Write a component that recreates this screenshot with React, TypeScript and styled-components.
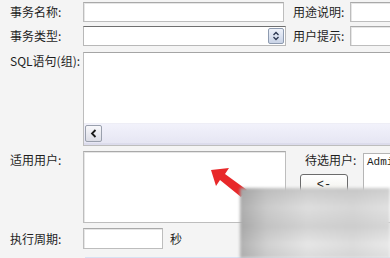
import React from "react";
import styled, { createGlobalStyle } from "styled-components";

const Global = createGlobalStyle`
  html, body { margin: 0; padding: 0; background: #f4f4f4; }
  body { width: 390px; height: 258px; overflow: hidden; font-family: "Noto Sans CJK SC", "Noto Sans", sans-serif; color: #1e1e1e; }
`;

const Page = styled.div`
  position: relative;
  width: 390px;
  height: 258px;
  overflow: hidden;
  padding-top: 2px;
  box-sizing: border-box;
`;

const Row = styled.div<{ $mt?: number; $top?: boolean }>`
  display: flex;
  align-items: ${(p) => (p.$top ? "flex-start" : "center")};
  margin-top: ${(p) => p.$mt ?? 0}px;
`;

const Label = styled.div<{ $pt?: number }>`
  width: 83px;
  flex: none;
  box-sizing: border-box;
  padding-left: 10px;
  padding-top: ${(p) => p.$pt ?? 0}px;
  font-size: 12px;
  line-height: 16px;
  white-space: nowrap;
`;

const SideLabel = styled.div<{ $ml: number; $w: number }>`
  margin-left: ${(p) => p.$ml}px;
  width: ${(p) => p.$w}px;
  flex: none;
  font-size: 12px;
  line-height: 16px;
  white-space: nowrap;
`;

const Field = styled.div<{ $w: number; $h: number }>`
  width: ${(p) => p.$w}px;
  height: ${(p) => p.$h}px;
  flex: none;
  box-sizing: border-box;
  background: #fff;
  border: 1px solid #bdbdbd;
  border-top-color: #a9a9a9;
  box-shadow: inset 1px 1px 0 #e6e6e6;
`;

const SelectBox = styled.div`
  width: 203px;
  height: 20px;
  flex: none;
  box-sizing: border-box;
  background: #fff;
  border: 1px solid #b8b8b8;
  border-top: 1px solid #6f6f6f;
  display: flex;
  justify-content: flex-end;
  align-items: center;
  padding-right: 1px;
`;

const SelectBtn = styled.div`
  width: 16px;
  height: 16px;
  box-sizing: border-box;
  border: 1px solid #8e9bb0;
  border-radius: 2px;
  background: linear-gradient(#eef2fa, #c9d3e6);
  display: flex;
  align-items: center;
  justify-content: center;
`;

const TextArea = styled.div`
  width: 320px;
  height: 94px;
  flex: none;
  box-sizing: border-box;
  background: #fff;
  border: 1px solid #bdbdbd;
  border-top-color: #a5a5a5;
  display: flex;
  flex-direction: column;
  justify-content: flex-end;
`;

const HScroll = styled.div`
  height: 19px;
  background: linear-gradient(#f2f2fb, #e6e6f3);
  border-top: 1px solid #eeeef6;
  border-bottom: 2px solid #dcdcec;
  display: flex;
  align-items: center;
  padding-left: 1px;
`;

const ScrollBtn = styled.div`
  width: 17px;
  height: 17px;
  box-sizing: border-box;
  border: 1px solid #9aa0ad;
  border-radius: 2px;
  background: linear-gradient(#f8f8fb, #dcdde6);
  display: flex;
  align-items: center;
  justify-content: center;
`;

const RightBlock = styled.div`
  display: grid;
  grid-template-columns: 63px auto;
  grid-template-rows: 23px auto;
  margin-left: 14px;
`;

const PickLabel = styled.div`
  padding-left: 5px;
  padding-top: 1px;
  font-size: 12px;
  line-height: 16px;
  white-space: nowrap;
`;

const ListBox = styled.div`
  grid-row: 1 / span 2;
  grid-column: 2;
  width: 40px;
  height: 70px;
  margin-top: 2px;
  box-sizing: border-box;
  background: #fff;
  border: 1px solid #b5b5b5;
  font-family: "Liberation Mono", "DejaVu Sans Mono", monospace;
  font-size: 11px;
  line-height: 14px;
  padding: 1px 0 0 3px;
  white-space: nowrap;
  overflow: hidden;
`;

const ArrowButton = styled.div`
  width: 48px;
  height: 26px;
  box-sizing: border-box;
  border: 1px solid #6b6b6b;
  border-radius: 3px;
  background: linear-gradient(#ffffff, #ecebe4);
  font-family: "Liberation Mono", monospace;
  font-size: 12px;
  line-height: 20px;
  text-align: center;
  color: #222;
`;

const Unit = styled.div`
  margin-left: 7px;
  font-size: 12px;
  line-height: 16px;
`;

const BottomStrip = styled.div`
  margin-top: 8px;
  margin-left: 85px;
  height: 3px;
  background: #d7e1f2;
`;

const Mosaic = styled.div`
  position: absolute;
  left: 240px;
  top: 188px;
  width: 150px;
  height: 70px;
  background:
    linear-gradient(90deg, rgba(140,140,140,0.6) 0%, rgba(175,175,175,0.4) 18%, rgba(220,220,220,0.15) 45%, rgba(200,200,200,0.35) 75%, rgba(240,240,240,0.2) 100%),
    linear-gradient(180deg, #c4c4c4 0%, #dedede 28%, #cfcfcf 55%, #e8e8e8 80%, #dadada 100%);
  filter: blur(1.5px);
`;

const RedArrow = styled.svg`
  position: absolute;
  left: 205px;
  top: 160px;
`;

export default function App() {
  return (
    <Page>
      <Global />
      <Row>
        <Label>事务名称:</Label>
        <Field $w={201} $h={20} />
        <SideLabel $ml={9} $w={57}>用途说明:</SideLabel>
        <Field $w={60} $h={20} />
      </Row>
      <Row $mt={4}>
        <Label>事务类型:</Label>
        <SelectBox>
          <SelectBtn>
            <svg width="8" height="10" viewBox="0 0 8 10">
              <path d="M1.5 4 L4 1.5 L6.5 4 M1.5 6 L4 8.5 L6.5 6" stroke="#2b3650" strokeWidth="1.3" fill="none" />
            </svg>
          </SelectBtn>
        </SelectBox>
        <SideLabel $ml={7} $w={57}>用户提示:</SideLabel>
        <Field $w={60} $h={20} />
      </Row>
      <Row $mt={6} $top>
        <Label $pt={1}>SQL语句(组):</Label>
        <TextArea>
          <HScroll>
            <ScrollBtn>
              <svg width="8" height="9" viewBox="0 0 8 9">
                <path d="M5.5 1 L2 4.5 L5.5 8" stroke="#1a1a1a" strokeWidth="1.8" fill="none" />
              </svg>
            </ScrollBtn>
          </HScroll>
        </TextArea>
      </Row>
      <Row $mt={5} $top>
        <Label $pt={1}>适用用户:</Label>
        <Field $w={203} $h={72} />
        <RightBlock>
          <PickLabel>待选用户:</PickLabel>
          <ListBox>Admin</ListBox>
          <ArrowButton>&lt;-</ArrowButton>
        </RightBlock>
      </Row>
      <Row $mt={5}>
        <Label>执行周期:</Label>
        <Field $w={80} $h={21} />
        <Unit>秒</Unit>
      </Row>
      <BottomStrip />
      <RedArrow width="50" height="45" viewBox="0 0 50 45">
        <path d="M6 10 L24 8 L20 14 L42 30 L36 37 L15 20 L11 26 Z" fill="#e8282a" />
      </RedArrow>
      <Mosaic />
    </Page>
  );
}
